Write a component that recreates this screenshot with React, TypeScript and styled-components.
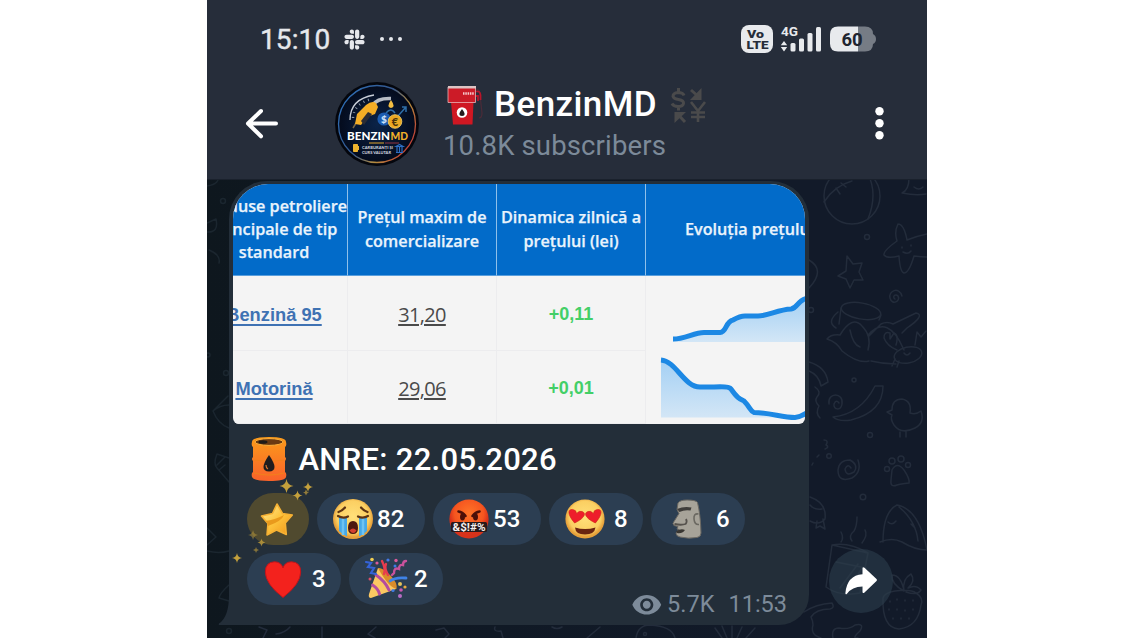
import React from 'react';
import styled, { createGlobalStyle } from 'styled-components';
import { FaSlack } from 'react-icons/fa';
import { MdVisibility } from 'react-icons/md';

const GlobalStyle = createGlobalStyle`
  * { box-sizing: border-box; }
  body { margin: 0; background: #fff; font-family: Roboto, sans-serif; }
  svg { display: block; overflow: visible; flex: none; }
`;

const Page = styled.div`
  display: flex;
  justify-content: center;
  height: 638px;
  overflow: hidden;
`;

const Phone = styled.main`
  position: relative;
  display: flex;
  flex-direction: column;
  width: 720px;
  height: 638px;
  overflow: hidden;
  background: linear-gradient(90deg, #0e171e 0%, #101925 40%, #121a29 80%);
`;

const Wallpaper = styled.svg`
  position: absolute;
  inset: 0;
  fill: none;
  stroke: #232c3b;
  stroke-width: 1.5;
  stroke-linecap: round;
  stroke-linejoin: round;
`;

const TopArea = styled.header`
  position: relative;
  height: 180px;
  background: #262d3a;
  border-bottom: 1px solid #1a212c;
`;

const StatusBar = styled.div`
  display: flex;
  align-items: center;
  height: 78px;
  padding: 0 51px 0 53px;
  color: #e6e8ec;
`;

const Clock = styled.span`
  width: 83px;
  font-size: 28px;
  letter-spacing: 0.1px;
  padding-top: 1px;
  -webkit-text-stroke: 0.4px #e6e8ec;
`;

const MoreDots = styled.svg`
  margin-left: 13px;
`;

const StatusRight = styled.div`
  display: flex;
  align-items: center;
  gap: 8px;
  margin-left: auto;
`;

const ChatHeader = styled.div`
  display: flex;
  align-items: center;
  height: 92px;
  padding: 0 43px 0 38px;
`;

const Avatar = styled.svg`
  margin-left: 56px;
`;

const Titles = styled.div`
  display: flex;
  flex-direction: column;
  margin-left: 24px;
  flex: 1;
`;

const TitleRow = styled.div`
  display: flex;
  align-items: center;
  height: 43px;
  padding-left: 5px;
`;

const Title = styled.h1`
  margin: 0 13px 0 10px;
  color: #fff;
  font-size: 35px;
  font-weight: 500;
  line-height: 40px;
  letter-spacing: 0.4px;
  padding-bottom: 3px;
`;

const Subtitle = styled.div`
  color: #7c8a99;
  font-size: 27.5px;
  line-height: 36px;
  letter-spacing: 0.14px;
  white-space: nowrap;
`;

const MessageRow = styled.section`
  position: relative;
  display: flex;
  align-items: flex-end;
  gap: 20px;
  padding: 1px 0 0 22px;
`;

const Bubble = styled.article`
  position: relative;
  width: 580px;
  height: 444px;
  padding: 3px 4px 0;
  background: #232e39;
  border-radius: 38px 38px 30px 0;
`;

const Tail = styled.svg`
  position: absolute;
  left: -11px;
  bottom: 0;
`;

const Photo = styled.div`
  width: 572px;
  height: 240px;
  overflow: hidden;
  background: #f4f4f4;
  border-radius: 35px 35px 6px 6px;
`;

const Grid = styled.div`
  display: grid;
  grid-template-columns: 147px 149px 149px 200px;
  grid-template-rows: 92px 75px 73px;
  width: 645px;
  margin-left: -32px;
`;

const HeadCell = styled.div<{ $start?: boolean }>`
  display: flex;
  align-items: center;
  justify-content: ${(p) => (p.$start ? 'flex-start' : 'center')};
  padding-left: ${(p) => (p.$start ? '39px' : '0')};
  background: #026bc9;
  border-right: 1px solid #8fc0ea;
  border-bottom: 1px solid #5a9fdd;
  color: #e9f3fc;
  font: 600 16.2px/23.3px 'Open Sans', sans-serif;
  -webkit-text-stroke: 0.25px #e9f3fc;
  text-align: center;
  white-space: nowrap;
`;

const Cell = styled.div`
  display: flex;
  align-items: center;
  justify-content: center;
  padding-top: 3px;
  border-right: 1px solid #ececee;
  border-bottom: 1px solid #ececee;
`;

const FuelLink = styled.span`
  color: #3f72b3;
  font: bold 18.3px 'Liberation Sans', Arial, sans-serif;
  text-decoration: underline;
  text-decoration-thickness: 1.5px;
  text-underline-offset: 3px;
  white-space: nowrap;
`;

const Price = styled.span`
  color: #4a4a4a;
  font: 20px 'Open Sans', sans-serif;
  letter-spacing: -0.65px;
  text-decoration: underline;
  text-decoration-thickness: 1.5px;
  text-underline-offset: 2px;
`;

const Delta = styled.span`
  color: #43cf67;
  font: bold 18px 'Liberation Sans', Arial, sans-serif;
`;

const Chart = styled.svg`
  align-self: start;
  width: 160px;
`;

const Caption = styled.div`
  display: flex;
  align-items: center;
  gap: 11.5px;
  height: 69px;
  padding-left: 18px;
  color: #fff;
  font-size: 31px;
  font-weight: 500;
  letter-spacing: 0.3px;
  span { padding-top: 2px; }
`;

const Reactions = styled.div`
  position: relative;
  display: flex;
  flex-wrap: wrap;
  gap: 8px;
  padding-left: 14px;
`;

const Pill = styled.div<{ $w: number; $gold?: boolean }>`
  display: flex;
  align-items: center;
  width: ${(p) => p.$w}px;
  height: 52px;
  padding-left: ${(p) => (p.$gold ? 9 : 14)}px;
  border-radius: 26px;
  background: ${(p) => (p.$gold ? '#504a2f' : '#2c3e52')};
`;

const Count = styled.span<{ $single?: boolean }>`
  margin-left: ${(p) => (p.$single ? 7 : 2)}px;
  color: #fff;
  font-size: 24px;
  font-weight: 500;
  line-height: 52px;
`;

const Sparkles = styled.svg`
  position: absolute;
  left: 0;
  top: -20px;
`;

const Meta = styled.footer`
  position: absolute;
  right: 22px;
  bottom: 5px;
  display: flex;
  align-items: center;
  color: #7d8b9a;
  font-size: 23.5px;
  line-height: 30px;
  svg { margin-right: 4.5px; }
`;

const Time = styled.time`
  margin-left: 14px;
`;

const ShareButton = styled.button`
  display: flex;
  align-items: center;
  justify-content: center;
  width: 64px;
  height: 64px;
  margin: 0 0 12px;
  padding: 0;
  border: 0;
  border-radius: 50%;
  background: rgba(44, 62, 76, 0.62);
`;

const Doodles = () => (
  <Wallpaper viewBox="207 0 720 638" width="720" height="638">
    <circle cx="852" cy="196" r="28" />
    <path d="M824 202q10-16 28-21M868 174q10 20 0 45M836 188l4 6M841 183l5 4" />
    <path d="M909 178q0 12-7 15q14 3 24 1M914 187q5 4 9 0" />
    <path d="M898 224q6 0 9 16q10-4 20-6M898 224q-4 8-1 17q-14 10-13 14q3 4 15 1q1 16 5 17q5 0 10-17q8 1 13 1M902 247l0 1M911 245l0 1M903 252q5 3 8-1" />
    <path d="M847 256l6 8 9-1-3 9 4 8-9 0-4 8-4-9-8-3 8-5z" />
    <circle cx="867" cy="237" r="2.5" />
    <circle cx="811" cy="310" r="2.5" />
    <circle cx="854" cy="380" r="2" />
    <path d="M809 260q17 10 0 28M902 296c-3-10-14-5-12 2c2 8 11 3 8-2c-3-3-6 1-3 3" />
    <ellipse cx="861" cy="311" rx="20" ry="8" transform="rotate(10 861 311)" />
    <path d="M841 308l-2 16M881 315l-2 5M838 312q-12 10-2 16M827 339q4-5 13-4q12-20 22-9q10 10 6 24M827 339q10 3 15 12q16 13 27 10M850 330q3 15 10 17M868 335q20-22 36 15M869 336l12-12q6-3 12 0l23-11q10 2-9 15l-5 5" />
    <ellipse cx="908" cy="355" rx="14" ry="8" transform="rotate(-12 908 355)" />
    <path d="M897 350q-10-4-13-12q0-7 6-5l0 6 4-6q5 2 2 12M915 345l2-13 4 5 5-6M904 353q3 4 6 0M895 359l-3 7M899 361l-2 6M871 361q12 3 25 3" />
    <path d="M809 362q17 5 19 20l-7 4q-2-11-12-15M815 387q7 5 2 10q-3 4 2 9q-4 7 1 12M829 404c-2-12 15-12 13 0c-1 7-9 6-8 0q2-5 5-1" />
    <path d="M875 386l8 0q0 26-32 34q-12 2-18-3q28-3 42-31z" />
    <path d="M892 410q0-11 10-11q10 2 8 14q6 2 11-2q4 12-6 17q-14 7-21-3q-4-6-2-10l-5-3zM900 432l0 5M906 432l0 5" />
    <circle cx="870" cy="435" r="2.5" />
    <circle cx="829" cy="456" r="2.3" />
    <circle cx="863" cy="497" r="2.8" />
    <path d="M824 440q5 0 2 5q4 2-1 4M817 457l2-2M812 465l1-2" />
    <path d="M858 460q4 12-6 18q-14 5-14-8q1-10 12-10q9 5 4 12q-8 5-9-3q3-6 6-1" />
    <path d="M892 470q5-9 12 0q6 9 5 13q-9 1-12 2q-7 3-6-5z" />
    <circle cx="887" cy="469" r="2.5" /><circle cx="892" cy="461" r="3" /><circle cx="901" cy="459" r="3" /><circle cx="908" cy="465" r="2.5" />
    <path d="M810 497q17 6 15 22q-6 7-15 2M810 505q4 5 12 4M817 521l-1 7 4-2 5 3-2-10" />
    <path d="M841 542q3-4 0-10M852 541q-4-5 2-10q3-5 3-14M862 543q6-8 3-13M832 545l36 8-8 40q-20 4-34-6zM832 545q18-3 36 8M836 562l30 6M840 588l18-24M848 590l14-22" />
    <path d="M883 542q0-30 14-37q22 4 30 45q-12 0-25-8q-10-5-22 0M888 522q4 4 8-1M911 524l4 4M899 507q17 14 19 34" />
    <path d="M883 598q1-5 12-7q16-2 21 2q8 5 5 12q-3 22-22 24q-17-1-16-31M904 591q-13-7-12-16q9 0 12 16q-2-12 7-17q5 7-3 14q8-4 13 2q-4 6-15 2" />
    <path d="M890 601l0 1M897 599l0 1M905 600l0 1M913 600l0 1M889 609l0 1M897 609l0 1M905 610l0 1M913 609l0 1M893 618l0 1M901 618l0 1M909 618l0 1" />
    <path d="M804 612q12-8 28-9q3 5-2 6q-14 0-19 8q2 4 2 8q-3 10 8 13M833 638q-2-10 6-10q10 2 16-3q10-2 5 6q-9 8-2 7" />
    <path d="M636 638q2-13 14-13q22 1 25 13M715 628l7 10M722 626l5 12M732 626l0 12M742 627l-5 11M755 628l-9 10M552 627q5 3 10 0M600 627l-13 11M436 630l8-2 5 6-4 4M495 627q-2 5 6 4l2 7M259 627l8 3-4 8M290 627q-5 6-14 7M322 627l0 11M376 627l-8 7 7 4" />
    <circle cx="645" cy="634" r="1.5" />
    <g stroke="#1b262f">
      <path d="M207 186q14-2 11-12M207 232q12 1 9-13l-9 4M209 250q12 5 10 13M228 396l-15 15q5 13 16 17M213 411q7-6 16-6M217 454l12 4M217 454q-4 10 0 14q7 8 12 14M217 465l8-8M219 470l6-5M207 528l9 9-9 8M207 551q12 3 22 0M229 585q-9 8-10 13l10 3" />
      <circle cx="223" cy="201" r="2.5" /><circle cx="226" cy="373" r="2.5" /><circle cx="229" cy="631" r="2.5" /><circle cx="208" cy="355" r="2" />
    </g>
  </Wallpaper>
);

const VoLte = () => (
  <svg width="32" height="28" viewBox="0 0 32 28">
    <rect width="32" height="28" rx="8" fill="#e8eaed" />
    <g fill="#262d3a" fontFamily="Roboto, sans-serif" fontWeight="900">
      <text x="6" y="12.500" fontSize="11.500" textLength="17" lengthAdjust="spacingAndGlyphs">Vo</text>
      <text x="5.500" y="24" fontSize="11.500" textLength="22" lengthAdjust="spacingAndGlyphs">LTE</text>
    </g>
  </svg>
);

const Signal = () => (
  <svg width="41" height="28" viewBox="0 0 41 28" fill="#e8eaed">
    <text x="0" y="11" fontFamily="Roboto, sans-serif" fontWeight="700" fontSize="13" textLength="17" lengthAdjust="spacingAndGlyphs">4G</text>
    <path d="M3 16l3.200 4.300H-.2zM-.2 22h6.400L3 26.500z" />
    <rect x="9.500" y="18" width="5" height="8.500" rx="1.500" />
    <rect x="18" y="13.500" width="5" height="13" rx="1.500" />
    <rect x="26.500" y="8" width="5" height="18.500" rx="1.500" />
    <rect x="35" y="2" width="5" height="24.500" rx="1.500" />
  </svg>
);

const Battery = () => (
  <svg width="46" height="26" viewBox="0 0 46 26">
    <path d="M28 0.500h7q8 0 8 7.500q3 1.500 3 5t-3 5q0 7.500-8 7.500h-7z" fill="#767c85" />
    <path d="M8 .5h20v25H8q-8 0-8-8V8.500q0-8 8-8z" fill="#e8eaed" />
    <text x="11.500" y="19.500" fontFamily="Roboto, sans-serif" fontWeight="700" fontSize="18.500" fill="#1f2530" textLength="21">60</text>
  </svg>
);

const BackArrow = () => (
  <svg width="34" height="34" viewBox="0 0 34 34" fill="none" stroke="#fff" strokeWidth="4" strokeLinecap="round" strokeLinejoin="round">
    <path d="M31 16.500H3.500M16 4L3 16.500l13 12.800" />
  </svg>
);

const ChannelAvatar = () => (
  <Avatar width="84" height="84" viewBox="0 0 84 84">
    <defs>
      <linearGradient id="ring" x1="0" y1="0.2" x2="1" y2="0.8">
        <stop offset="0" stopColor="#2d6fb8" /><stop offset=".45" stopColor="#35578c" /><stop offset=".7" stopColor="#b48a3c" /><stop offset="1" stopColor="#c22f38" />
      </linearGradient>
      <radialGradient id="disc"><stop offset="0" stopColor="#0b2348" /><stop offset="1" stopColor="#040b1c" /></radialGradient>
    </defs>
    <circle cx="42" cy="42" r="42" fill="#04060d" />
    <circle cx="42" cy="42" r="38.500" fill="url(#disc)" stroke="url(#ring)" strokeWidth="1.300" />
    <path d="M15 38Q15 17 39 13" fill="none" stroke="#c8ced8" strokeWidth="1.300" />
    <path d="M18 36Q19 21 37 17" fill="none" stroke="#8d97a8" strokeWidth="2.500" strokeDasharray="1 4" />
    <path d="M38 23Q42 16 56 16.500" fill="none" stroke="#b7bcc4" strokeWidth="3.600" />
    <path d="M18 46l8-13" stroke="#7a6644" strokeWidth="1.500" />
    <path d="M22 32l9-9q6-5 10-2l2 4-3 7-8 3-6 8-6-1z" fill="#f4ad25" />
    <path d="M26 39l7-9 4 2-8 11z" fill="#2b2c34" />
    <path d="M56 18q5 7 0 8-5-1 0-8z" fill="#f2bd43" />
    <path d="M51 31q5-6 9 0M63 34l8-9m-4 0h4v5" fill="none" stroke="#2f6fa8" strokeWidth="1.500" />
    <circle cx="49" cy="37" r="6.600" fill="#1c5cb0" />
    <circle cx="60" cy="39.500" r="6.800" fill="#e9a823" stroke="#ffd567" strokeWidth=".8" />
    <g fontFamily="Lato, sans-serif" fontWeight="900">
      <text x="46" y="41" fontSize="10" fill="#cfe3fa">$</text>
      <text x="56.800" y="43.500" fontSize="11" fill="#47330c">€</text>
      <text x="12" y="57.500" fontSize="11.500" fill="#fff" textLength="43" lengthAdjust="spacingAndGlyphs">BENZIN</text>
      <text x="55.500" y="57.500" fontSize="11.500" fill="#f0b02a" textLength="17.500" lengthAdjust="spacingAndGlyphs">MD</text>
      <text x="27" y="67" fontSize="4" fill="#cdd2dc" textLength="31">CARBURANȚI ȘI</text>
      <text x="27" y="71.500" fontSize="4" fill="#cdd2dc" textLength="29">CURS VALUTAR</text>
    </g>
    <path d="M34 61h15" stroke="#e0a52c" strokeWidth="1" /><path d="M50 61h14" stroke="#b8404a" strokeWidth=".8" />
    <path d="M18.500 62.500h4v7h-4zM23.500 64v4" fill="#efb42e" stroke="#efb42e" strokeWidth="1" />
    <path d="M61 64.500l3.500-2 3.500 2zM62 65v5m2.500-5v5m2.500-5v5m-6 .5h7" fill="none" stroke="#2d6ec4" strokeWidth="1.200" />
  </Avatar>
);

const PumpEmoji = () => (
  <svg width="36" height="42" viewBox="0 0 36 42">
    <path d="M28 4q4 0 4 6l2 18q0 5-3 5" fill="none" stroke="#4b2b38" strokeWidth="1.200" />
    <path d="M3 17h22.500l-1 22.500H5z" fill="#cf1722" />
    <path d="M0 2h27.500v15.500H0z" fill="#cc1b27" stroke="#e9b3b5" strokeWidth=".8" />
    <path d="M0 1h28v2.500H0z" fill="#dcc4c4" />
    <path d="M15 8.500h11" stroke="#f4c9cb" strokeWidth="2.400" strokeDasharray="1.500 .8" />
    <path d="M28 6.500q4-1 4.500 3.500v5M28 11h2v5" fill="none" stroke="#b9152a" strokeWidth="1.800" />
    <circle cx="14" cy="27.500" r="5.300" fill="#fff" />
    <path d="M14 24q5.500 7 0 7-5.500 0 0-7z" fill="#241b1c" />
  </svg>
);

const CurrencyEmoji = () => (
  <svg width="36" height="36" viewBox="0 0 36 36" fill="none" stroke="#4a4a4b" strokeWidth="3">
    <path d="M14 7.500Q13 4.500 8 4.500 3 5 3 8.500 4 11 8.500 11.500 14 12.500 13.500 15.500 13 18.500 8 18.500 3.500 18.500 2 15.500M8.500 0v5M8.500 18v4.500" strokeWidth="3" />
    <path d="M21 2l9 8" /><path d="M31.500 0v12H20z" fill="#4a4a4b" stroke="none" />
    <path d="M15 34l-7-7.500" /><path d="M4.500 35V24H16z" fill="#4a4a4b" stroke="none" />
    <path d="M21 14l7 9 7-9M28 22v12M21 24.500h14M21 29h14" strokeWidth="2.600" />
  </svg>
);

const MenuDots = () => (
  <svg width="9" height="34" viewBox="0 0 9 34" fill="#fff">
    <circle cx="4.500" cy="4.200" r="4.200" /><circle cx="4.500" cy="16.300" r="4.200" /><circle cx="4.500" cy="28.300" r="4.200" />
  </svg>
);

const BarrelEmoji = () => (
  <svg width="36" height="46" viewBox="0 0 36 46">
    <defs><linearGradient id="barrel" x1="0" y1="0" x2="0" y2="1"><stop offset="0" stopColor="#fb9b1b" /><stop offset="1" stopColor="#f9622a" /></linearGradient></defs>
    <path d="M1 6q0-5 17-5t17 5q1 4-1 5v10q2 1 0 4v11q2 1 1 5-1 4-17 4T1 41q-1-4 1-5V25q-2-2 0-4V11Q0 10 1 6z" fill="url(#barrel)" />
    <ellipse cx="18" cy="6" rx="14" ry="3.400" fill="#6a3a12" stroke="#ffb23c" />
    <ellipse cx="12" cy="6" rx="4.500" ry="1.800" fill="#1f1b18" />
    <path d="M3 24q15 3 30 0M3 37q15 4 30 0" fill="none" stroke="#f2801c" />
    <path d="M18 19q11 16 0 16.500Q7 35 18 19z" fill="#1f1c1e" />
    <path d="M15 29q0 3 2 4" stroke="#d8742c" strokeWidth="1.200" fill="none" />
  </svg>
);

const StarEmoji = () => (
  <svg width="42" height="42" viewBox="0 0 42 42">
    <defs><linearGradient id="star" x1="0" y1="0" x2="1" y2="1"><stop offset="0" stopColor="#fff0a0" /><stop offset=".5" stopColor="#fdc33c" /><stop offset="1" stopColor="#ef9418" /></linearGradient></defs>
    <path d="M21 6l5.500 9.500 9.800 1.500-7 8 1 11.500-9.800-4.500-9.500 5 1-11.500-6.500-7.500 11-2.500z" fill="url(#star)" stroke="#f6b133" strokeWidth="1.600" strokeLinejoin="round" />
    <path d="M9 23q10-1 19-6-2 6-16 11l-1-4z" fill="#e99a1c" />
  </svg>
);

const FaceDefs = () => (
  <defs>
    <radialGradient id="face" cx=".5" cy=".45"><stop offset="0" stopColor="#ffe07a" /><stop offset=".8" stopColor="#fbcf62" /><stop offset="1" stopColor="#e6a03a" /></radialGradient>
    <radialGradient id="angry" cx=".5" cy=".35"><stop offset="0" stopColor="#ff7428" /><stop offset=".75" stopColor="#f5551f" /><stop offset="1" stopColor="#d8321a" /></radialGradient>
  </defs>
);

const CryEmoji = () => (
  <svg width="44" height="44" viewBox="0 0 44 44">
    <FaceDefs />
    <circle cx="22" cy="22" r="20" fill="url(#face)" />
    <path d="M8 20h8v19.500q-4-2-8-5.500zM28 20h8v14q-4 4-8 5.500z" fill="#47a9e8" />
    <path d="M12 21v17M32 21v17" stroke="#6ec3f2" strokeWidth="2.500" />
    <path d="M7 19q5 3 10 .5M27 19.500q5 2.500 10-.5M7.500 15q4-1.500 6.500-4.500M36.500 15q-4-1.500-6.500-4.500" fill="none" stroke="#5e3413" strokeWidth="2.200" strokeLinecap="round" />
    <path d="M17 31q0-7 5-7t5 7q0 6-5 6t-5-6z" fill="#4c1a10" />
    <path d="M18.500 33.500q3.500-4 7 0-3 5-7 0z" fill="#d4402f" />
  </svg>
);

const AngryEmoji = () => (
  <svg width="44" height="44" viewBox="0 0 44 44">
    <circle cx="22" cy="22" r="19.600" fill="url(#angry)" />
    <path d="M11.500 14.500q4 .5 7 4.500M32.500 14.500q-4 .5-7 4.500" fill="none" stroke="#4c1008" strokeWidth="2.600" strokeLinecap="round" />
    <ellipse cx="15.500" cy="20" rx="2.500" ry="3.400" fill="#4c1008" /><ellipse cx="28.500" cy="20" rx="2.500" ry="3.400" fill="#4c1008" />
    <rect x="4" y="25" width="36" height="10" rx="1.500" fill="#29191a" />
    <text x="5.500" y="33.500" fontFamily="Roboto, sans-serif" fontSize="10.500" fontWeight="700" fill="#f4efee" textLength="33" lengthAdjust="spacingAndGlyphs">&amp;$!#%</text>
  </svg>
);

const heart = 'M0 7C-9-1-8.500-6-4.500-6.500Q-1-7 0-3 1-7 4.500-6.500C8.500-6 9-1 0 7z';

const LoveEmoji = () => (
  <svg width="44" height="44" viewBox="0 0 44 44">
    <circle cx="22" cy="22" r="19.600" fill="url(#face)" />
    <path d={heart} transform="translate(13 19.500) rotate(12) scale(1.080 .95)" fill="#ee1d2b" stroke="#cf2415" strokeWidth=".6" />
    <path d={heart} transform="translate(31 19.500) rotate(-12) scale(1.080 .95)" fill="#ee1d2b" stroke="#cf2415" strokeWidth=".6" />
    <path d="M12 30.500q10 3 20.500 0-1 7-10.500 7t-10-7z" fill="#6a2510" />
  </svg>
);

const MoaiEmoji = () => (
  <svg width="44" height="44" viewBox="0 0 44 44">
    <path d="M13 6q2-3 9-3 9 0 10.500 2.500 3 12 3.500 30.500 0 4-4 4.500-9 1.500-17-.5-4-1-4-4l3-3.500-2-.5 1-2.500-4-1q-2-2 0-4l5-8-2-4z" fill="#a7a399" stroke="#6b6862" strokeWidth="1" />
    <path d="M12 12q7-3 14.500-1.500l-1 3q-6-1-11 1.500z" fill="#3f3d3a" />
    <path d="M9.500 27q7 1.500 11 0 2-2 .5-5" fill="none" stroke="#56524d" strokeWidth="1.800" />
    <path d="M11 34.500q5-3.500 9-1.500-3 4-8 3z" fill="#393632" />
    <path d="M33.500 17q-5-1-4.500 5 .5 6 5 5.500" fill="none" stroke="#6b6861" strokeWidth="1.600" />
  </svg>
);

const HeartEmoji = () => (
  <svg width="44" height="44" viewBox="0 0 44 44">
    <path d="M22 40.500Q4.500 27 4.300 15 4.500 5 13.500 4.800q6.500 0 8.500 6 2-6 8.500-6 9 .2 9.200 10.200Q39.500 27 22 40.500z" fill="#f3221d" stroke="#c2141b" strokeWidth="1" />
  </svg>
);

const PartyEmoji = () => (
  <svg width="44" height="44" viewBox="0 0 44 44" fill="none" strokeLinecap="round">
    <path d="M15 11q17 7 18 21L8 41q-3 0-2-4z" fill="#fbc862" />
    <path d="M13 18q9 6 13 15M9.500 28q6 4 7 9" stroke="#b54c9e" strokeWidth="3" />
    <path d="M15 11q4-1 12 7t6.500 14q-6-2-11-9t-7.500-12z" fill="#d98c2a" />
    <path d="M21 17q2-5-2-13M25 18q-4-7-2-11" stroke="#e63c4e" strokeWidth="2.400" />
    <path d="M3 5l5 1-3 4 6 1-3 5 5 1" stroke="#3563d8" strokeWidth="2.200" />
    <path d="M43 4q-3 0-3 4-4-1-4 4-5-2-5 4l-2 2" stroke="#c9529c" strokeWidth="2.400" />
    <path d="M27 24q5-4 16-3" stroke="#3f83e6" strokeWidth="2.800" />
    <g stroke="none">
      <circle cx="9" cy="2.500" r="1.800" fill="#f2cf54" /><circle cx="14" cy="6" r="1.600" fill="#db5b9b" /><circle cx="25" cy="3" r="1.600" fill="#4478e4" />
      <circle cx="33" cy="3.500" r="1.700" fill="#db5b9b" /><circle cx="32" cy="9" r="1.500" fill="#3e7be6" /><circle cx="7" cy="22" r="1.500" fill="#d94f68" />
      <circle cx="37" cy="27" r="2" fill="#e6c35c" /><circle cx="42" cy="30" r="1.600" fill="#e9aa42" /><circle cx="30" cy="33.500" r="1.600" fill="#3f7be0" /><circle cx="38" cy="33" r="1.800" fill="#ca58b0" /><circle cx="37" cy="39" r="2" fill="#b76cc4" />
    </g>
  </svg>
);

const spark = (x: number, y: number, r: number, o = 1) => (
  <path key={`${x}-${y}`} opacity={o} fill="#c4a03c"
    d={`M${x} ${y - r}q${r * 0.12} ${r * 0.88} ${r} ${r}q${-r * 0.88} ${r * 0.12} ${-r} ${r}q${-r * 0.12} ${-r * 0.88} ${-r} ${-r}q${r * 0.88} ${-r * 0.12} ${r} ${-r}z`} />
);

const ShareIcon = () => (
  <svg width="34" height="30" viewBox="0 0 34 30" fill="#fff">
    <path d="M18.500 2.500q0-2 2-.7L32.500 13q1 1 0 2L20.500 26.500q-2 1.300-2-.7V20.500Q8 20.500 2.800 28q-1.500 1-1.400-1Q3 9.500 18.500 8.300z" />
  </svg>
);

export default function App() {
  return (
    <>
      <GlobalStyle />
      <Page>
        <Phone>
          <Doodles />
          <TopArea>
            <StatusBar>
              <Clock>15:10</Clock>
              <FaSlack size={23} />
              <MoreDots width="24" height="6" viewBox="0 0 24 6" fill="#e6e8ec">
                <circle cx="3" cy="3" r="2" /><circle cx="12" cy="3" r="2" /><circle cx="21" cy="3" r="2" />
              </MoreDots>
              <StatusRight><VoLte /><Signal /><Battery /></StatusRight>
            </StatusBar>
            <ChatHeader>
              <BackArrow />
              <ChannelAvatar />
              <Titles>
                <TitleRow><PumpEmoji /><Title>BenzinMD</Title><CurrencyEmoji /></TitleRow>
                <Subtitle>10.8K subscribers</Subtitle>
              </Titles>
              <MenuDots />
            </ChatHeader>
          </TopArea>
          <MessageRow>
            <Bubble>
              <Tail width="12" height="30" viewBox="0 0 12 30"><path d="M12 0H11Q11 22 1 28.500q-1 1.500 1 1.500h10z" fill="#232e39" /></Tail>
              <Photo>
                <Grid>
                  <HeadCell>Produse petroliere<br />principale de tip<br />standard</HeadCell>
                  <HeadCell>Prețul maxim de<br />comercializare</HeadCell>
                  <HeadCell>Dinamica zilnică a<br />prețului (lei)</HeadCell>
                  <HeadCell $start>Evoluția prețului</HeadCell>
                  <Cell><FuelLink>Benzină 95</FuelLink></Cell>
                  <Cell><Price>31,20</Price></Cell>
                  <Cell><Delta>+0,11</Delta></Cell>
                  <Chart height="75" viewBox="646 276 160 75">
                    <defs><linearGradient id="area" x1="0" y1="0" x2="0" y2="1"><stop offset="0" stopColor="#a4d0f4" /><stop offset="1" stopColor="#d3e6f6" /></linearGradient></defs>
                    <path d="M673 339C685 339 694 332.500 704 332.500H720C727 332 725 322 733 320Q740 316 745 316H758C768 316 778 309.500 791 309C798 308 797 300 808 298V342H673z" fill="url(#area)" />
                    <path d="M673 339C685 339 694 332.500 704 332.500H720C727 332 725 322 733 320Q740 316 745 316H758C768 316 778 309.500 791 309C798 308 797 300 808 298" fill="none" stroke="#1c88e4" strokeWidth="5" />
                  </Chart>
                  <Cell><FuelLink>Motorină</FuelLink></Cell>
                  <Cell><Price>29,06</Price></Cell>
                  <Cell><Delta>+0,01</Delta></Cell>
                  <Chart height="73" viewBox="646 351 160 73">
                    <path d="M661 360C676 361 684 387 700 387H714Q729 386 731 389C738 399 740 399 744 401C750 407 750 411 754 412.500C770 412.500 782 417.500 795 417.500Q801 417 808 412V417.500H661z" fill="url(#area)" />
                    <path d="M661 360C676 361 684 387 700 387H714Q729 386 731 389C738 399 740 399 744 401C750 407 750 411 754 412.500C770 412.500 782 417.500 795 417.500Q801 417 808 412" fill="none" stroke="#1c88e4" strokeWidth="5" />
                  </Chart>
                </Grid>
              </Photo>
              <Caption><BarrelEmoji /><span>ANRE: 22.05.2026</span></Caption>
              <Reactions>
                <Pill $w={62} $gold><StarEmoji /></Pill>
                <Pill $w={108}><CryEmoji /><Count>82</Count></Pill>
                <Pill $w={108}><AngryEmoji /><Count>53</Count></Pill>
                <Pill $w={94}><LoveEmoji /><Count $single>8</Count></Pill>
                <Pill $w={94}><MoaiEmoji /><Count $single>6</Count></Pill>
                <Pill $w={94}><HeartEmoji /><Count $single>3</Count></Pill>
                <Pill $w={94}><PartyEmoji /><Count $single>2</Count></Pill>
                <Sparkles width="90" height="100" viewBox="233 473 90 100">
                  {[spark(286.500, 486, 7), spark(308, 487, 5), spark(297.500, 495.500, 5), spark(306, 492.500, 3, 0.7), spark(253, 535, 5, 0.5), spark(261.500, 542.500, 4, 0.8), spark(256, 550, 3, 0.6), spark(237, 558, 5)]}
                </Sparkles>
              </Reactions>
              <Meta><MdVisibility size={31.500} /><span>5.7K</span><Time>11:53</Time></Meta>
            </Bubble>
            <ShareButton aria-label="Share"><ShareIcon /></ShareButton>
          </MessageRow>
        </Phone>
      </Page>
    </>
  );
}
